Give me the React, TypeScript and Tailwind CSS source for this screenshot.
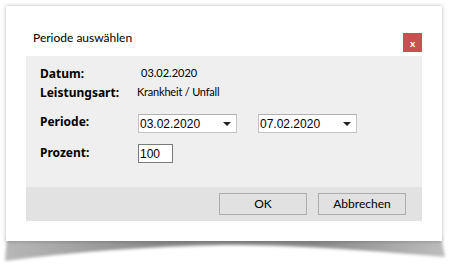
import React from "react";

const ui = { fontFamily: 'Lato, "Noto Sans", sans-serif' };
const lbl = { fontFamily: '"Noto Sans", Lato, sans-serif' };
const ctl = { fontFamily: '"Liberation Sans", Arial, sans-serif' };

function Dropdown({ value }: { value: string }) {
  return (
    <div className="flex h-[19px] w-[99px] items-center justify-between border border-[#c4c4c4] border-t-[#b0b0b0] bg-white pl-[1px] pr-[5px]">
      <span className="text-[12px] leading-none text-black" style={ctl}>
        {value}
      </span>
      <svg width="8" height="4" viewBox="0 0 8 4">
        <path d="M0 0h8L4 4z" fill="#222" />
      </svg>
    </div>
  );
}

function Button({ label }: { label: string }) {
  return (
    <button className="flex h-[22px] w-[88px] items-center justify-center border border-[#adadad] bg-[#e1e1e1] text-[12px] text-black">
      {label}
    </button>
  );
}

function Label({ children }: { children: React.ReactNode }) {
  return (
    <span className="w-[98px] text-[12px] font-bold text-black" style={lbl}>
      {children}
    </span>
  );
}

export default function App() {
  return (
    <div className="relative h-[270px] w-[456px] overflow-hidden bg-white" style={ui}>
      {/* curled shadow under the card */}
      <svg className="absolute left-0 top-0" width="456" height="270">
        <defs>
          <linearGradient id="sh" x1="0" y1="0" x2="1" y2="0">
            <stop offset="0" stopColor="#b8b8b8" />
            <stop offset="0.35" stopColor="#8a8a8a" />
            <stop offset="0.7" stopColor="#8a8a8a" />
            <stop offset="1" stopColor="#bdbdbd" />
          </linearGradient>
          <filter id="bl" x="-10%" y="-50%" width="120%" height="200%">
            <feGaussianBlur stdDeviation="1.6" />
          </filter>
        </defs>
        <path
          d="M7 236 L441 236 L445 257 Q300 244 224 245 Q110 247 5 261 Z"
          fill="url(#sh)"
          filter="url(#bl)"
        />
      </svg>

      <div className="relative ml-[6px] mt-[6px] flex h-[235px] w-[436px] flex-col bg-white px-[20px] shadow-[0_0_4px_rgba(0,0,0,0.28)]">
        <div className="flex h-[50px] items-end justify-between pb-[4px]">
          <span className="mb-[5px] ml-[7px] text-[12px] text-black">Periode auswählen</span>
          <div className="flex h-[19px] w-[19px] items-center justify-center bg-[#c75050] text-[10px] font-bold leading-none text-white">
            x
          </div>
        </div>

        <div className="flex h-[131px] flex-col bg-[#efefef] pl-[14px] pt-[8px]">
          <div className="flex h-[19px] items-center">
            <Label>Datum:</Label>
            <span className="pl-[3px] text-[11px] text-black">03.02.2020</span>
          </div>
          <div className="flex h-[19px] items-center">
            <Label>Leistungsart:</Label>
            <span className="-ml-[1px] text-[11px] tracking-[-0.2px] text-black">Krankheit / Unfall</span>
          </div>
          <div className="mt-[12px] flex h-[19px] items-center">
            <span className="-mt-[4px] flex">
              <Label>Periode:</Label>
            </span>
            <Dropdown value="03.02.2020" />
            <div className="w-[21px]" />
            <Dropdown value="07.02.2020" />
          </div>
          <div className="mt-[11px] flex h-[19px] items-center">
            <span className="-mt-[2px] flex">
              <Label>Prozent:</Label>
            </span>
            <div className="flex h-[19px] w-[35px] items-center border border-[#7a7a7a] bg-white pl-[1px]">
              <span className="text-[12px] leading-none text-black" style={ctl}>
                100
              </span>
            </div>
          </div>
        </div>

        <div className="flex h-[34px] items-center justify-end gap-[11px] bg-[#e2e2e2] pr-[16px]">
          <Button label="OK" />
          <Button label="Abbrechen" />
        </div>
      </div>
    </div>
  );
}
